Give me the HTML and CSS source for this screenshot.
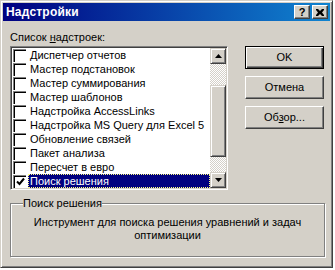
FILE: index.html
```html
<html>
<head>
    <meta http-equiv="Content-Type" content="text/html;charset=utf-8">
    <link rel="stylesheet" href="styles.css">
</head>
<body>
    <div class="dialog">
        <div class="titlebar">
            <span class="title">Надстройки</span>
            <div class="caption-buttons">
                <div class="cap-btn help">?</div>
                <div class="cap-btn">
                    <svg width="8" height="7" viewBox="0 0 8 7">
                        <path d="M0 0h2l2 2 2-2h2v1l-2 2.5 2 2.5v1h-2l-2-2-2 2h-2v-1l2-2.5-2-2.5z" fill="#000"/>
                    </svg>
                </div>
            </div>
        </div>
        <div class="content">
            <div class="main">
                <div class="list-col">
                    <div class="label">Список <u>н</u>адстроек:</div>
                    <div class="listbox">
                        <ul class="items">
                            <li><span class="check"></span><span class="text">Диспетчер отчетов</span></li>
                            <li><span class="check"></span><span class="text">Мастер подстановок</span></li>
                            <li><span class="check"></span><span class="text">Мастер суммирования</span></li>
                            <li><span class="check"></span><span class="text">Мастер шаблонов</span></li>
                            <li><span class="check"></span><span class="text">Надстройка AccessLinks</span></li>
                            <li><span class="check"></span><span class="text">Надстройка MS Query для Excel 5</span></li>
                            <li><span class="check"></span><span class="text">Обновление связей</span></li>
                            <li><span class="check"></span><span class="text">Пакет анализа</span></li>
                            <li><span class="check"></span><span class="text">Пересчет в евро</span></li>
                            <li class="selected">
                                <span class="check">
                                    <svg width="9" height="9" viewBox="0 0 9 9">
                                        <path d="M1 4.5l2.5 2.5 4.5-5.5" stroke="#000" stroke-width="2" fill="none"/>
                                    </svg>
                                </span>
                                <span class="text">Поиск решения</span>
                            </li>
                        </ul>
                        <div class="scrollbar">
                            <div class="sb-btn">
                                <svg width="7" height="4" viewBox="0 0 7 4"><path d="M3.5 0L7 4H0z" fill="#000"/></svg>
                            </div>
                            <div class="track top"></div>
                            <div class="thumb"></div>
                            <div class="track bottom"></div>
                            <div class="sb-btn">
                                <svg width="7" height="4" viewBox="0 0 7 4"><path d="M0 0h7L3.5 4z" fill="#000"/></svg>
                            </div>
                        </div>
                    </div>
                </div>
                <div class="buttons">
                    <div class="btn default">OK</div>
                    <div class="btn">Отмена</div>
                    <div class="btn">Об<u>з</u>ор...</div>
                </div>
            </div>
            <fieldset class="group">
                <legend>Поиск решения</legend>
                <p>Инструмент для поиска решения уравнений и задач оптимизации</p>
            </fieldset>
        </div>
    </div>
</body>
</html>
```

FILE: styles.css
```css
body {
    margin: 0;
    background: #fff;
    font-family: 'Liberation Sans', Arial, sans-serif;
    font-size: 11px;
    color: #000;
}

.dialog {
    box-sizing: border-box;
    width: 333px;
    height: 268px;
    padding: 2px;
    background: #d4d0c8;
    border: 1px solid;
    border-color: #d4d0c8 #404040 #404040 #d4d0c8;
    box-shadow: inset 1px 1px #fff, inset -1px -1px #808080;
    display: flex;
    flex-direction: column;
}

.titlebar {
    height: 18px;
    display: flex;
    align-items: center;
    justify-content: space-between;
    background: linear-gradient(to right, #000080, #1084d0);
    padding: 0 2px 0 3px;
}

.title {
    color: #fff;
    font-weight: bold;
    font-size: 12px;
    letter-spacing: 0.2px;
    line-height: 18px;
}

.caption-buttons {
    display: flex;
    gap: 2px;
}

.cap-btn {
    box-sizing: border-box;
    width: 16px;
    height: 14px;
    background: #d4d0c8;
    border: 1px solid;
    border-color: #fff #404040 #404040 #fff;
    box-shadow: inset -1px -1px #808080;
    display: flex;
    align-items: center;
    justify-content: center;
}

.cap-btn.help {
    font-weight: bold;
    font-size: 11px;
    line-height: 12px;
}

.content {
    padding: 10px 0 0 7px;
}

.main {
    display: flex;
}

.list-col {
    width: 218px;
}

.label {
    line-height: 13px;
    height: 13px;
    margin-bottom: 2px;
}

.listbox {
    box-sizing: border-box;
    height: 144px;
    display: flex;
    background: #fff;
    border: 1px solid;
    border-color: #808080 #fff #fff #808080;
    box-shadow: inset 1px 1px #404040, inset -1px -1px #d4d0c8;
    padding: 1px;
}

.items {
    list-style: none;
    margin: 0;
    padding: 0;
    flex: 1;
}

.items li {
    height: 14px;
    line-height: 14px;
    display: flex;
    align-items: center;
}

.check {
    box-sizing: border-box;
    width: 13px;
    height: 13px;
    margin-left: 1px;
    border-top: 1px solid #808080;
    border-left: 1px solid #808080;
    box-shadow: inset 1px 1px #000;
    display: flex;
    align-items: center;
    justify-content: center;
}

.text {
    flex: 1;
    margin-left: 2px;
    padding-left: 2px;
    white-space: nowrap;
}

.selected .text {
    background: #000080;
    color: #fff;
    outline: 1px dotted #ffff80;
    outline-offset: -1px;
}

.scrollbar {
    width: 16px;
    display: flex;
    flex-direction: column;
}

.sb-btn,
.thumb {
    box-sizing: border-box;
    background: #d4d0c8;
    border: 1px solid;
    border-color: #d4d0c8 #404040 #404040 #d4d0c8;
    box-shadow: inset 1px 1px #fff, inset -1px -1px #808080;
}

.sb-btn {
    height: 16px;
    display: flex;
    align-items: center;
    justify-content: center;
}

.thumb {
    height: 72px;
}

.track {
    background: repeating-conic-gradient(#d4d0c8 0% 25%, #fff 0% 50%) 0 0 / 2px 2px;
}

.track.top {
    height: 21px;
}

.track.bottom {
    height: 15px;
}

.buttons {
    margin: 15px 0 0 17px;
    display: flex;
    flex-direction: column;
    gap: 7px;
}

.btn {
    box-sizing: border-box;
    width: 79px;
    height: 23px;
    line-height: 21px;
    text-align: center;
    border: 1px solid;
    border-color: #fff #404040 #404040 #fff;
    box-shadow: inset -1px -1px #808080;
}

.btn.default {
    border-color: #000;
    box-shadow: inset 1px 1px #fff, inset -1px -1px #404040, inset -2px -2px #808080;
}

.group {
    box-sizing: border-box;
    width: 315px;
    margin: 7px 0 0 0;
    padding: 6px 10px 14px;
    border: 1px solid #808080;
    box-shadow: inset 1px 1px #fff, 1px 1px #fff;
}

.group legend {
    padding: 0;
    margin-left: 2px;
    line-height: 13px;
    background: #d4d0c8;
}

.group p {
    margin: 0;
    line-height: 13px;
    text-align: center;
}
```
